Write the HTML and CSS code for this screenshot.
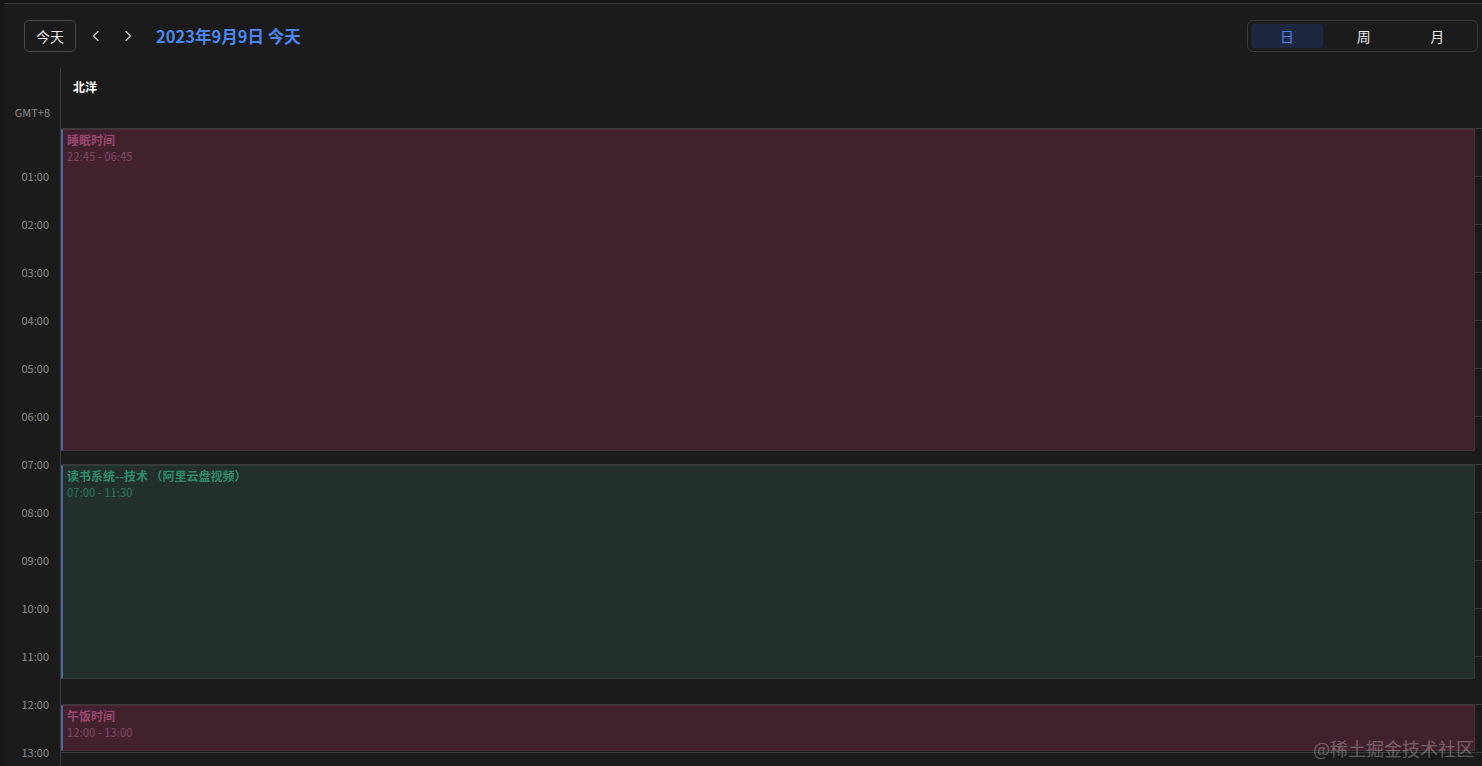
FILE: index.html
```html
<!DOCTYPE html>
<html lang="zh-CN">
<head>
    <meta charset="utf-8">
    <meta name="viewport" content="width=device-width, initial-scale=1.0">
    <title>日程</title>
    <link rel="stylesheet" href="styles.css">
</head>
<body>
    <div class="app">
        <div class="toolbar">
            <button class="btn-today">今天</button>
            <button class="btn-nav" aria-label="上一天">
                <svg width="14" height="14" viewBox="0 0 14 14"><path d="M9 2.5 L4.5 7 L9 11.5" fill="none" stroke="currentColor" stroke-width="1.6" stroke-linecap="round" stroke-linejoin="round"/></svg>
            </button>
            <button class="btn-nav" aria-label="下一天">
                <svg width="14" height="14" viewBox="0 0 14 14"><path d="M5 2.5 L9.5 7 L5 11.5" fill="none" stroke="currentColor" stroke-width="1.6" stroke-linecap="round" stroke-linejoin="round"/></svg>
            </button>
            <h2 class="current-date">2023年9月9日 今天</h2>

            <div class="view-switch">
                <span class="item is-active">日</span>
                <span class="item">周</span>
                <span class="item">月</span>
            </div>
        </div>

        <div class="cal-head">
            <div class="tz">GMT+8</div>
            <div class="day-title">北洋</div>
        </div>

        <div class="cal-body">
            <div class="hours">
                <div class="hour"></div>
                <div class="hour"><span>01:00</span></div>
                <div class="hour"><span>02:00</span></div>
                <div class="hour"><span>03:00</span></div>
                <div class="hour"><span>04:00</span></div>
                <div class="hour"><span>05:00</span></div>
                <div class="hour"><span>06:00</span></div>
                <div class="hour"><span>07:00</span></div>
                <div class="hour"><span>08:00</span></div>
                <div class="hour"><span>09:00</span></div>
                <div class="hour"><span>10:00</span></div>
                <div class="hour"><span>11:00</span></div>
                <div class="hour"><span>12:00</span></div>
                <div class="hour"><span>13:00</span></div>
            </div>

            <div class="day-col">
                <!-- top / height come from event times, 48px per hour -->
                <div class="event event--rest" style="top: 1px; height: 322px;">
                    <div class="event-title">睡眠时间</div>
                    <div class="event-time">22:45 - 06:45</div>
                </div>
                <div class="event event--study" style="top: 337px; height: 214px;">
                    <div class="event-title">读书系统--技术 （阿里云盘视频）</div>
                    <div class="event-time">07:00 - 11:30</div>
                </div>
                <div class="event event--rest" style="top: 577px; height: 46px;">
                    <div class="event-title">午饭时间</div>
                    <div class="event-time">12:00 - 13:00</div>
                </div>
            </div>
        </div>

        <div class="watermark">@稀土掘金技术社区</div>
    </div>
</body>
</html>
```

FILE: styles.css
```css
:root {
    --ff: "Noto Sans CJK SC", "Noto Sans", sans-serif;
    --bg: #1b1b1b;
    --line: #333;
    --hour: 48px;
    --blue: #4a86f0;
}

html, body {
    margin: 0;
    height: 100%;
    background: var(--bg);
    overflow: hidden;
}

body {
    font-family: var(--ff);
    color: #ddd;
}

.app {
    position: relative;
    height: 100%;
    box-sizing: border-box;
    border-top: 3px solid #141414;
    border-left: 4px solid #161616;
    box-shadow: inset 0 1px 0 #3a3a3a;

    display: flex;
    flex-direction: column;
}

/* toolbar */
.toolbar {
    height: 65px;
    padding: 0 4px 0 20px;
    box-sizing: border-box;

    display: flex;
    align-items: center;
}

button {
    font-family: var(--ff);
    background: none;
    cursor: pointer;
}

.btn-today {
    height: 32px;
    padding: 0 11px;
    border: 1px solid #4a4a4a;
    border-radius: 5px;
    color: #e8e8e8;
    font-size: 14px;
    margin-right: 4px;
}

.btn-nav {
    width: 32px;
    height: 32px;
    padding: 0;
    border: 0;
    color: #b8b8b8;

    display: inline-flex;
    justify-content: center;
    align-items: center;
}

.current-date {
    margin: 0 0 0 12px;
    font-size: 16.5px;
    font-weight: 700;
    color: var(--blue);
}

.view-switch {
    margin-left: auto;
    width: 231px;
    height: 32px;
    padding: 3px;
    box-sizing: border-box;
    border: 1px solid #3a3a3a;
    border-radius: 6px;

    display: flex;
}
.view-switch .item {
    flex: 1;
    border-radius: 4px;
    font-size: 14px;
    color: #e8e8e8;

    display: flex;
    justify-content: center;
    align-items: center;
}
.view-switch .is-active {
    flex: 0 0 72px;
    margin-right: 4px;
    background: #1d2840;
    color: var(--blue);
}

/* calendar head */
.cal-head {
    height: 60px;
    display: grid;
    grid-template-columns: 56px 1fr;
}
.tz {
    font-size: 11px;
    color: #8c8c8c;
    padding: 0 10px 8px 0;

    display: flex;
    justify-content: flex-end;
    align-items: flex-end;
}
.day-title {
    border-left: 1px solid #3a3a3a;
    padding: 10px 0 0 12px;
    font-size: 12px;
    font-weight: 700;
    color: #fff;
}

/* calendar body */
.cal-body {
    flex: 1;
    display: grid;
    grid-template-columns: 56px 1fr;
    overflow: hidden;
}

.hours .hour {
    height: var(--hour);
    position: relative;
}
.hours .hour span {
    position: absolute;
    right: 11px;
    top: -8px;
    font-size: 11px;
    line-height: 16px;
    color: #8c8c8c;
}

.day-col {
    position: relative;
    border-left: 1px solid #3a3a3a;
    height: calc(var(--hour) * 14);
    background: repeating-linear-gradient(to bottom,
        #3a3a3a 0, #3a3a3a 1px,
        transparent 1px, transparent var(--hour));
}

.event {
    position: absolute;
    left: 0;
    right: 7px;
    box-sizing: border-box;
    padding: 1px 4px;
    border: 1px solid rgba(255, 255, 255, 0.06);
    border-left: 2px solid #4465a6;
    overflow: hidden;
}
.event-title {
    font-size: 12px;
    font-weight: 700;
    line-height: 17px;
}
.event-time {
    font-size: 11px;
    font-weight: 500;
    line-height: 17px;
}

.event--rest {
    background: #42212f;
}
.event--rest .event-title {
    color: #96486d;
}
.event--rest .event-time {
    color: #77445d;
}

.event--study {
    background: #222f2d;
}
.event--study .event-title {
    color: #2e8b6c;
}
.event--study .event-time {
    color: #286f55;
}

.watermark {
    position: absolute;
    right: 8px;
    bottom: 5px;
    font-size: 18px;
    color: rgba(255, 255, 255, 0.3);
    pointer-events: none;
}
```
